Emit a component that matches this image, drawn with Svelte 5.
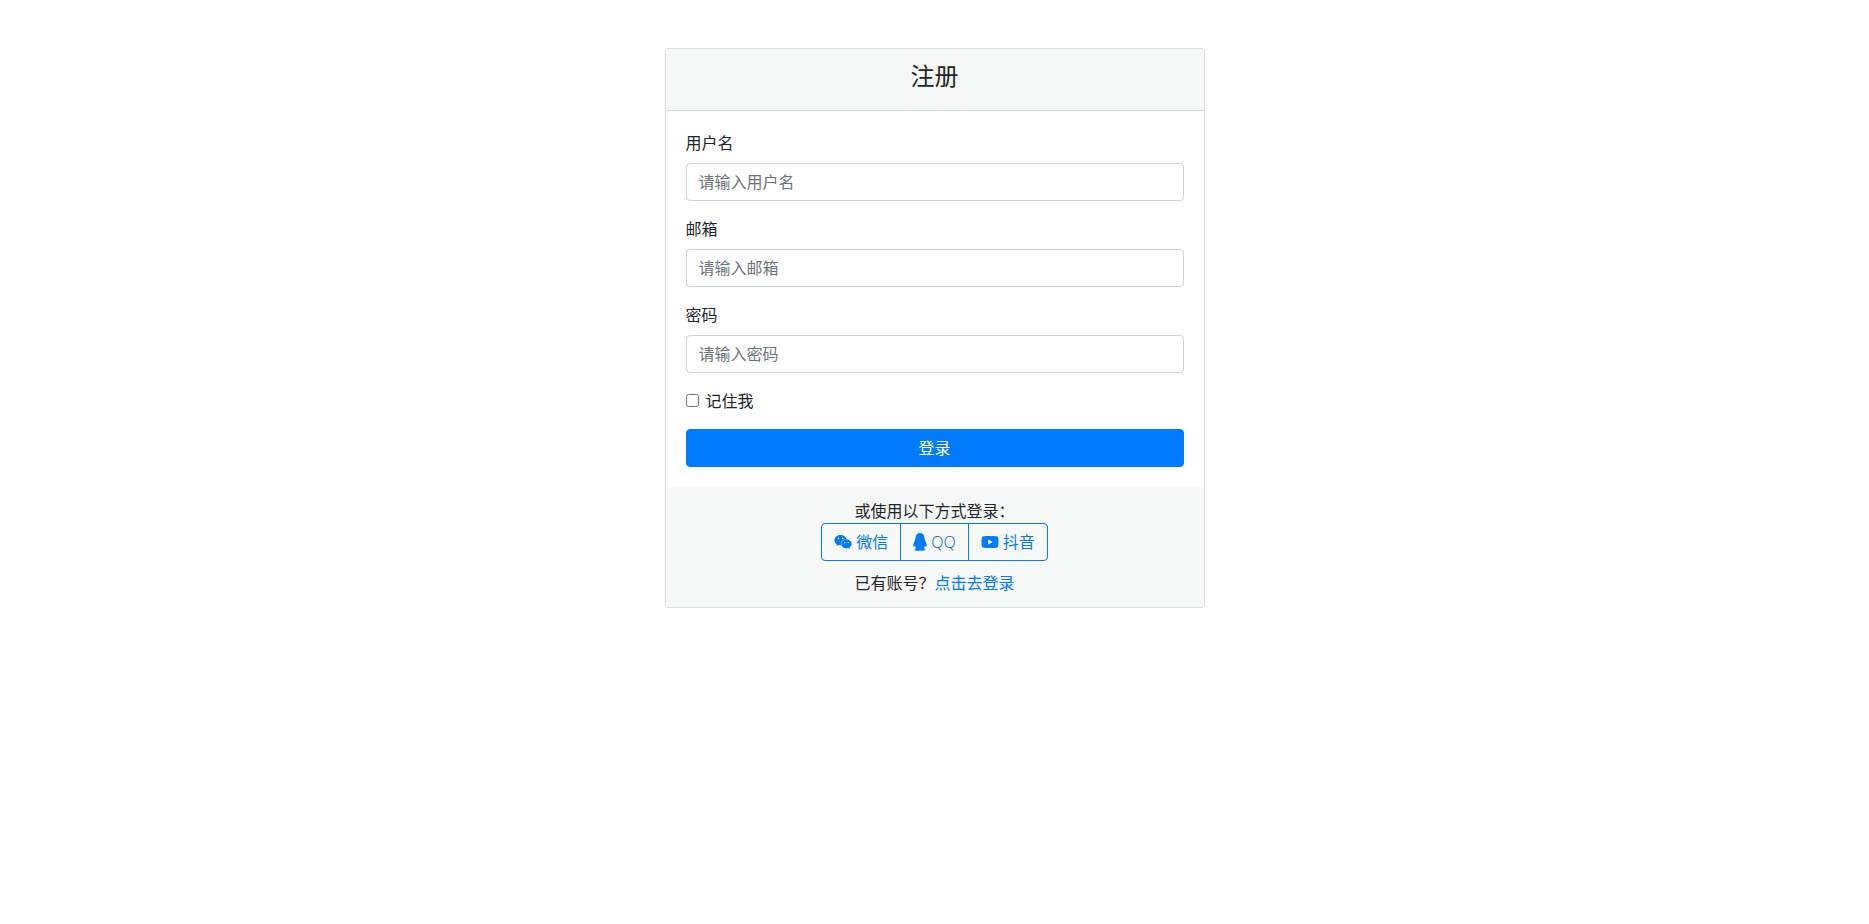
<script>
  const fields = [
    { id: 'username', label: '用户名', type: 'text', placeholder: '请输入用户名' },
    { id: 'email', label: '邮箱', type: 'email', placeholder: '请输入邮箱' },
    { id: 'password', label: '密码', type: 'password', placeholder: '请输入密码' }
  ];
</script>

<main class="card">
  <header class="card-header">
    <h4>注册</h4>
  </header>
  <form class="card-body" onsubmit={(e) => e.preventDefault()}>
    {#each fields as f}
      <div class="form-group">
        <label for={f.id}>{f.label}</label>
        <input id={f.id} type={f.type} placeholder={f.placeholder} />
      </div>
    {/each}
    <div class="form-group check">
      <input id="remember" type="checkbox" />
      <label for="remember">记住我</label>
    </div>
    <button class="submit" type="submit">登录</button>
  </form>
  <footer class="card-footer">
    <div>或使用以下方式登录：</div>
    <div class="btn-group">
      <button type="button" class="btn-outline">
        <svg class="ico wide" viewBox="0 0 576 512" aria-hidden="true"><path d="M385.2 167.6c6.4 0 12.6.3 18.8 1.1C387.4 90.3 303.3 32 207.7 32 100.5 32 13 104.8 13 197.4c0 53.4 29.3 97.5 77.9 131.6l-19.3 58.6 68-34.1c24.4 4.8 43.8 9.7 68.2 9.7 6.2 0 12.1-.3 18.3-.8-4-12.9-6.2-26.6-6.2-40.8-.1-84.9 72.9-154 165.3-154zm-104.5-52.9c14.5 0 24.2 9.7 24.2 24.4 0 14.5-9.7 24.2-24.2 24.2-14.8 0-29.3-9.7-29.3-24.2.1-14.7 14.6-24.4 29.3-24.4zm-136.4 48.6c-14.5 0-29.3-9.7-29.3-24.2 0-14.8 14.8-24.4 29.3-24.4 14.8 0 24.4 9.7 24.4 24.4 0 14.6-9.6 24.2-24.4 24.2zM563 319.4c0-77.9-77.9-141.3-165.4-141.3-92.7 0-165.4 63.4-165.4 141.3S305 460.7 397.6 460.7c19.3 0 38.9-5.1 58.6-9.9l53.4 29.3-14.8-48.6C534 402.1 563 363.2 563 319.4zm-219.1-24.5c-9.7 0-19.3-9.7-19.3-19.6 0-9.7 9.7-19.3 19.3-19.3 14.8 0 24.4 9.7 24.4 19.3 0 10-9.7 19.6-24.4 19.6zm107.1 0c-9.7 0-19.3-9.7-19.3-19.6 0-9.7 9.7-19.3 19.3-19.3 14.5 0 24.4 9.7 24.4 19.3.1 10-9.9 19.6-24.4 19.6z"/></svg>
        微信
      </button>
      <button type="button" class="btn-outline">
        <svg class="ico narrow" viewBox="0 0 14 18" aria-hidden="true"><path d="M7 0C10.2 0 11.6 2.5 11.6 5.5C11.6 6.5 11.9 7 12.4 8C13.4 10 14 12 13.4 13.7C13.1 14.1 12.6 13.6 12 12.8C11.8 13.8 11.3 14.6 10.6 15.2C11.8 15.6 12.8 16.2 12.4 17C11.9 17.9 8.5 17.8 7 17.5C5.5 17.8 2.1 17.9 1.6 17C1.2 16.2 2.2 15.6 3.4 15.2C2.7 14.6 2.2 13.8 2 12.8C1.4 13.6 .9 14.1 .6 13.7C0 12 .6 10 1.6 8C2.1 7 2.4 6.5 2.4 5.5C2.4 2.5 3.8 0 7 0Z"/></svg>
        <span class="latin">QQ</span>
      </button>
      <button type="button" class="btn-outline">
        <svg class="ico wide" viewBox="0 0 576 512" aria-hidden="true"><path d="M549.655 124.083c-6.281-23.65-24.787-42.276-48.284-48.597C458.781 64 288 64 288 64S117.22 64 74.629 75.486c-23.497 6.322-42.003 24.947-48.284 48.597-11.412 42.867-11.412 132.305-11.412 132.305s0 89.438 11.412 132.305c6.281 23.65 24.787 41.5 48.284 47.821C117.22 448 288 448 288 448s170.78 0 213.371-11.486c23.497-6.321 42.003-24.171 48.284-47.821 11.412-42.867 11.412-132.305 11.412-132.305s0-89.438-11.412-132.305zm-317.51 213.508V175.185l142.739 81.205-142.739 81.201z"/></svg>
        抖音
      </button>
    </div>
    <div class="signin">已有账号？<a href="#login">点击去登录</a></div>
  </footer>
</main>

<style>
  :global(body) {
    margin: 0;
    background: #fff;
    color: #212529;
    font-family: "Open Sans", "Noto Sans CJK SC", sans-serif;
    font-size: 16px;
    line-height: 1.5;
  }
  .card {
    box-sizing: border-box;
    width: 540px;
    margin: 48px auto 0;
    border: 1px solid rgba(0, 0, 0, 0.125);
    border-radius: 4px;
    background: #fff;
  }
  .card-header {
    padding: 12px 20px;
    background: #f7f8f8;
    border-bottom: 1px solid rgba(0, 0, 0, 0.125);
    text-align: center;
    border-radius: 3px 3px 0 0;
  }
  h4 {
    margin: 1px 0 7px;
    font-size: 24px;
    font-weight: 400;
    line-height: 1.2;
  }
  .card-body {
    padding: 20px;
  }
  .form-group {
    margin-bottom: 16px;
  }
  label {
    display: inline-block;
    margin-bottom: 8px;
  }
  input:not([type="checkbox"]) {
    display: block;
    box-sizing: border-box;
    width: 100%;
    height: 38px;
    padding: 6px 12px;
    border: 1px solid #ced4da;
    border-radius: 4px;
    background: #fff;
    color: #495057;
    font: inherit;
    outline: none;
  }
  input::placeholder {
    color: #6c757d;
    opacity: 1;
  }
  .check {
    display: flex;
    align-items: center;
    height: 24px;
  }
  .check input {
    width: 13px;
    height: 13px;
    margin: 0 7px 0 0;
    padding: 0;
  }
  .check label {
    margin: 0;
  }
  .submit {
    display: block;
    width: 100%;
    height: 38px;
    padding: 6px 12px;
    border: 1px solid #007bff;
    border-radius: 4px;
    background: #007bff;
    color: #fff;
    font: inherit;
    cursor: pointer;
  }
  .card-footer {
    padding: 12px 20px;
    background: #f7f8f8;
    text-align: center;
    border-radius: 0 0 3px 3px;
  }
  .btn-group {
    display: inline-flex;
    vertical-align: top;
  }
  .btn-outline {
    display: flex;
    align-items: center;
    justify-content: center;
    gap: 4px;
    box-sizing: border-box;
    height: 38px;
    padding: 6px 12px;
    border: 1px solid #007bff;
    background: transparent;
    color: #007bff;
    font: inherit;
    cursor: pointer;
  }
  .btn-outline + .btn-outline {
    margin-left: -1px;
  }
  .btn-outline:first-child {
    border-radius: 4px 0 0 4px;
  }
  .btn-outline:last-child {
    border-radius: 0 4px 4px 0;
  }
  .ico {
    height: 16px;
    fill: currentColor;
    flex: none;
  }
  .ico.wide {
    width: 18px;
  }
  .ico.narrow {
    width: 14px;
    height: 18px;
  }
  .latin {
    font-weight: 300;
    color: #0062cc;
  }
  .signin {
    margin-top: 10px;
  }
  a {
    color: #007bff;
    text-decoration: none;
  }
</style>
